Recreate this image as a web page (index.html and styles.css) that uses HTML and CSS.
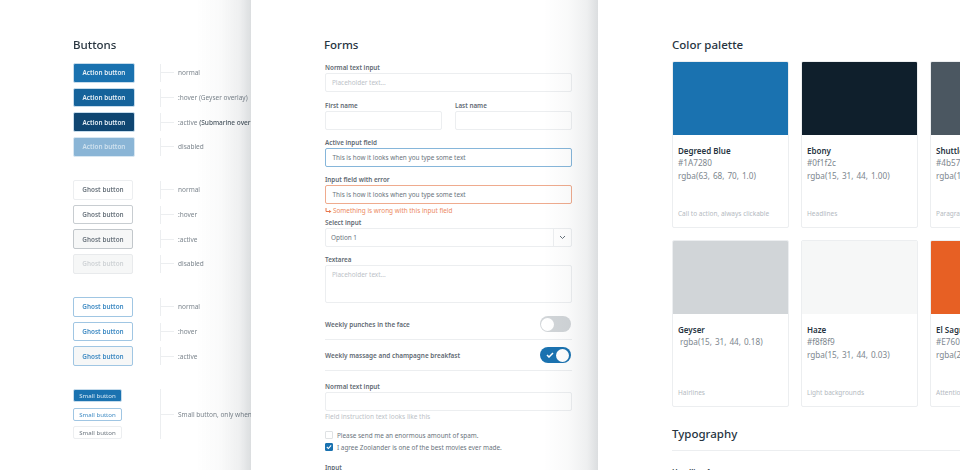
FILE: index.html
```html
<!DOCTYPE html>
<html lang="en">
<head>
<meta charset="utf-8">
<title>Style guide</title>
<link rel="stylesheet" href="styles.css">
</head>
<body>
<div class="page">
  <section class="panel panel-buttons">
    <h2 class="title">Buttons</h2>
    <div class="group">
      <div class="row"><span class="btn act">Action button</span><span class="tick"></span><span class="note">normal</span></div>
      <div class="row"><span class="btn act hov">Action button</span><span class="tick"></span><span class="note">:hover (Geyser overlay)</span></div>
      <div class="row"><span class="btn act dn">Action button</span><span class="tick"></span><span class="note">:active <b>(Submarine overlay)</b></span></div>
      <div class="row"><span class="btn act off">Action button</span><span class="tick"></span><span class="note">disabled</span></div>
    </div>
    <div class="group">
      <div class="row"><span class="btn gh">Ghost button</span><span class="tick"></span><span class="note">normal</span></div>
      <div class="row"><span class="btn gh gh-h">Ghost button</span><span class="tick"></span><span class="note">:hover</span></div>
      <div class="row"><span class="btn gh gh-a">Ghost button</span><span class="tick"></span><span class="note">:active</span></div>
      <div class="row"><span class="btn gh gh-d">Ghost button</span><span class="tick"></span><span class="note">disabled</span></div>
    </div>
    <div class="group">
      <div class="row"><span class="btn gb">Ghost button</span><span class="tick"></span><span class="note">normal</span></div>
      <div class="row"><span class="btn gb gb-h">Ghost button</span><span class="tick"></span><span class="note">:hover</span></div>
      <div class="row"><span class="btn gb gb-a">Ghost button</span><span class="tick"></span><span class="note">:active</span></div>
    </div>
    <div class="small-group">
      <div class="small-col">
        <span class="sm sm-p">Small button</span>
        <span class="sm sm-b">Small button</span>
        <span class="sm sm-g">Small button</span>
      </div>
      <span class="tick tick-tall"></span>
      <span class="note">Small button, only when necessary</span>
    </div>
  </section>

  <section class="panel panel-forms">
    <h2 class="title">Forms</h2>
    <label class="lbl first">Normal text input</label>
    <div class="field ph">Placeholder text...</div>
    <div class="two">
      <div><label class="lbl">First name</label><div class="field"></div></div>
      <div><label class="lbl">Last name</label><div class="field"></div></div>
    </div>
    <label class="lbl">Active input field</label>
    <div class="field typed active">This is how it looks when you type some text</div>
    <label class="lbl">Input field with error</label>
    <div class="field typed error">This is how it looks when you type some text</div>
    <div class="errmsg">
      <svg class="errarrow" width="7" height="6" viewBox="0 0 7 6"><path d="M1 0v3.500h4" fill="none" stroke="#e8764a"/><path d="M4 2l2.500 1.500L4 5z" fill="#e8764a"/></svg>
      Something is wrong with this input field
    </div>
    <label class="lbl sel-l">Select input</label>
    <div class="select"><span class="opt">Option 1</span><span class="caret"><svg width="7" height="5" viewBox="0 0 7 5"><path d="M1 1l2.500 2.500L6 1" fill="none" stroke="#67727b"/></svg></span></div>
    <label class="lbl">Textarea</label>
    <div class="field area ph">Placeholder text...</div>
    <div class="switch-row sw1">
      <span class="sw-l">Weekly punches in the face</span>
      <span class="toggle"><span class="knob"></span></span>
    </div>
    <div class="switch-row">
      <span class="sw-l">Weekly massage and champagne breakfast</span>
      <span class="toggle on">
        <svg width="8" height="6" viewBox="0 0 8 6"><path d="M1 3l2 2 4-4" fill="none" stroke="#fff" stroke-width="1.500"/></svg>
        <span class="knob"></span>
      </span>
    </div>
    <label class="lbl lbl-after">Normal text input</label>
    <div class="field"></div>
    <p class="help">Field instruction text looks like this</p>
    <div class="check c1"><span class="box"></span>Please send me an enormous amount of spam.</div>
    <div class="check"><span class="box checked"><svg width="7" height="6" viewBox="0 0 7 6"><path d="M1 3l1.800 1.800L6 1" fill="none" stroke="#fff" stroke-width="1.300"/></svg></span>I agree Zoolander is one of the best movies ever made.</div>
    <label class="lbl lbl-last">Input</label>
  </section>

  <section class="panel panel-colors">
    <h2 class="title">Color palette</h2>
    <div class="cards">
      <article class="card"><div class="sw blue"></div><div class="info"><strong>Degreed Blue</strong><span>#1A7280</span><span>rgba(63, 68, 70, 1.0)</span><small>Call to action, always clickable</small></div></article>
      <article class="card"><div class="sw ebony"></div><div class="info"><strong>Ebony</strong><span>#0f1f2c</span><span>rgba(15, 31, 44, 1.00)</span><small>Headlines</small></div></article>
      <article class="card"><div class="sw shuttle"></div><div class="info"><strong>Shuttle Gray</strong><span>#4b5761</span><span>rgba(15, 31, 44, 0.75)</span><small>Paragraphs</small></div></article>
      <article class="card"><div class="sw geyser"></div><div class="info"><strong>Geyser</strong><span class="in">rgba(15, 31, 44, 0.18)</span><small>Hairlines</small></div></article>
      <article class="card"><div class="sw haze"></div><div class="info"><strong>Haze</strong><span>#f8f8f9</span><span>rgba(15, 31, 44, 0.03)</span><small>Light backgrounds</small></div></article>
      <article class="card"><div class="sw sag"></div><div class="info"><strong>El Sagrado</strong><span>#E76024</span><span>rgba(231, 96, 36, 1.0)</span><small>Attention</small></div></article>
    </div>
    <h2 class="title typo">Typography</h2>
    <div class="rule"></div>
    <h3 class="h1-sample">Headline 1</h3>
  </section>
</div>
</body>
</html>
```
FILE: styles.css
```css
* { box-sizing: border-box; margin: 0; padding: 0; }
html, body { width: 960px; height: 470px; overflow: hidden; background: #fff; }
body { font-family: "Noto Sans", "Open Sans", sans-serif; color: #4b5761; }
.page { display: flex; width: 960px; height: 470px; overflow: hidden; filter: blur(.4px); }
.panel { height: 470px; background: #fff; flex: none; position: relative; }
.panel-forms::before, .panel-colors::before { content: ""; position: absolute; top: 0; bottom: 0; left: -55px; width: 55px; background: linear-gradient(to right, rgba(15, 31, 44, 0) 0%, rgba(15, 31, 44, .025) 45%, rgba(15, 31, 44, .07) 80%, rgba(15, 31, 44, .15) 100%); }
.panel-buttons { width: 251px; padding: 37px 0 0 73px; z-index: 1; white-space: nowrap; }
.panel-forms { width: 347px; padding: 37px 0 0 74px; z-index: 2; }
.panel-colors { width: 362px; padding: 37px 0 0 74px; z-index: 3; }
.title { font-size: 11.500px; line-height: 15px; font-weight: 500; color: #27343f; }
.panel-forms .title { margin-left: -1px; }

.panel-buttons .title { margin-bottom: 11px; }
.group { display: flex; flex-direction: column; gap: 5px; margin-bottom: 23.300px; }
.row { display: grid; grid-template-columns: 87px 14px auto; align-items: center; height: 19.700px; }
.btn { justify-self: start; display: flex; align-items: center; justify-content: center; height: 19.700px; border-radius: 2px; font-size: 6.400px; font-weight: 600; border: 1px solid transparent; }
.act { width: 62px; color: #e7f0f7; background: #1a72b0; border-color: #c6dcec; }
.hov { background: #15639b; }
.dn { background: #0f4672; }
.off { background: #8ab5d6; color: #cfe1ee; border-color: #d8e7f2; }
.gh { width: 60px; color: #6a747d; background: #fff; border-color: #eceef0; }
.gh-h { border-color: #c8cdd1; }
.gh-a { border-color: #c2c7cb; background: #f6f7f7; }
.gh-d { background: #f6f7f7; border-color: #e8eaec; color: #cfd3d6; }
.gb { width: 60px; color: #3e8ac3; background: #fff; border-color: #a0c6e3; }
.gb-a { background: #f6f7f7; }
.tick { width: 14px; height: 18px; border-left: 1px solid #eceef0; display: flex; align-items: center; }
.tick::after { content: ""; width: 13px; height: 1px; background: #eceef0; }
.note { margin-left: 4px; font-size: 6.500px; color: #7d868e; }
.note b { font-weight: 500; color: #4b5761; }

.small-group { display: flex; align-items: center; }
.small-col { display: flex; flex-direction: column; gap: 5.500px; width: 49px; flex: none; }
.sm { height: 13px; width: 49px; display: flex; align-items: center; justify-content: center; font-size: 6.100px; border: 1px solid transparent; border-radius: 2px; }
.sm-p { color: #dcebf5; background: #1a72b0; border-color: #c6dcec; }
.sm-b { color: #3e8ac3; border-color: #a0c6e3; }
.sm-g { color: #6a747d; border-color: #eceef0; }
.tick-tall { height: 50px; flex: none; margin-left: 38px; }

.lbl { display: block; font-size: 6.300px; line-height: 9px; font-weight: 600; color: #5f6a73; margin-top: 8px; margin-bottom: 1px; }
.lbl.first { margin-top: 11px; }
.field { height: 19px; width: 247px; border: 1px solid #eceef0; border-radius: 2px; font-size: 6.400px; display: flex; align-items: center; padding-left: 6px; background: #fff; }
.ph { color: #bcc2c7; }
.two { display: flex; gap: 13px; margin-top: 9px; width: 247px; }
.two > div { flex: 1; }
.two .lbl { margin-top: 0; }
.two .field { width: 117px; }
.typed { color: #6a747d; padding-left: 6.500px; }
.active { border-color: #86b6da; }
.error { border-color: #efab8e; }
.errmsg { display: flex; align-items: center; gap: 1px; font-size: 6.400px; line-height: 9px; color: #ec8a62; margin-top: 2px; }
.errarrow { flex: none; margin-right: 0; }
.lbl.sel-l { margin-top: 3px; }
.select { display: flex; height: 19px; width: 247px; border: 1px solid #eceef0; border-radius: 2px; font-size: 6.400px; color: #6a747d; }
.opt { flex: 1; display: flex; align-items: center; padding-left: 5px; }
.caret { width: 18px; display: flex; align-items: center; justify-content: center; border-left: 1px solid #eceef0; }
.area { height: 38px; align-items: flex-start; padding-top: 4px; }
.switch-row { display: flex; align-items: center; justify-content: space-between; width: 247px; height: 31px; border-bottom: 1px solid #eceef0; }
.sw1 { margin-top: 6px; }
.sw-l { font-size: 6.400px; font-weight: 600; color: #5f6a73; }
.toggle { display: flex; align-items: center; justify-content: flex-start; width: 31px; height: 16px; margin-right: 1px; border-radius: 8px; background: #d1d5d8; padding: 0 1px; }
.knob { width: 13px; height: 13px; border-radius: 50%; background: #fff; flex: none; }
.toggle.on { background: #1a72b0; justify-content: space-between; padding: 0 2px 0 6px; }
.lbl.lbl-after { margin-top: 11px; }
.help { font-size: 6.500px; line-height: 9px; color: #bcc2c7; margin-top: 1px; }
.check { display: flex; align-items: center; height: 12.300px; font-size: 6.400px; color: #6a747d; white-space: nowrap; }
.c1 { margin-top: 8px; }
.box { flex: none; width: 8px; height: 8px; margin-right: 4px; border: 1px solid #dfe2e4; border-radius: 1px; display: flex; align-items: center; justify-content: center; }
.box.checked { background: #1a72b0; border-color: #1a72b0; }
.lbl.lbl-last { margin-top: 9.700px; }

.panel-colors .title { margin-bottom: 9px; }
.cards { display: grid; grid-template-columns: 117px 117px 117px; gap: 12px; width: 400px; }
.card { height: 167px; border: 1px solid #eceef0; border-radius: 2px; background: #fff; display: flex; flex-direction: column; overflow: hidden; }
.sw { height: 74px; margin: -1px -1px 0; flex: none; }
.blue { background: #1a72b0; }
.ebony { background: #0f1f2c; }
.shuttle { background: #4b5761; }
.geyser { background: #d1d5d8; }
.haze { background: #f6f7f7; }
.sag { background: #e76024; }
.info { flex: 1; display: flex; flex-direction: column; padding: 10px 5px 9px; white-space: nowrap; }
.info strong { font-size: 8px; line-height: 12px; font-weight: 600; color: #27343f; }
.info span { font-size: 8.200px; line-height: 12.500px; color: #7d868e; word-spacing: .8px; }
.info .in { padding-left: 2px; }
.info small { margin-top: auto; font-size: 6.500px; line-height: 9px; color: #b4babf; }
.panel-colors .title.typo { margin: 18.500px 0 9px; }
.rule { height: 1px; width: 400px; background: #eceef0; }
.h1-sample { font-size: 7.500px; line-height: 10px; font-weight: 600; color: #27343f; margin-top: 15px; }
```
